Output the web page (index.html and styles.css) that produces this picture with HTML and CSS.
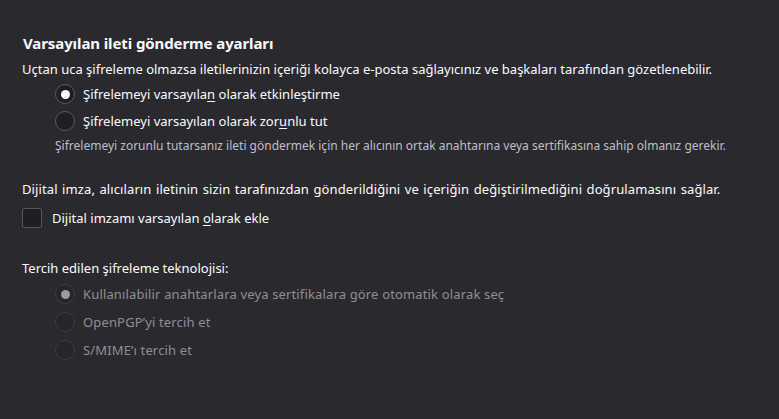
FILE: index.html
```html
<!DOCTYPE html>
<html lang="tr">
<head>
<meta charset="utf-8">
<link rel="stylesheet" href="styles.css">
</head>
<body>
<main class="page">
  <h2 class="title">Varsayılan ileti gönderme ayarları</h2>
  <p class="desc">Uçtan uca şifreleme olmazsa iletilerinizin içeriği kolayca e-posta sağlayıcınız ve başkaları tarafından gözetlenebilir.</p>
  <div class="group">
    <label class="option"><span class="radio checked"></span><span>Şifrelemeyi varsayıla<u>n</u> olarak etkinleştirme</span></label>
    <label class="option"><span class="radio"></span><span>Şifrelemeyi varsayılan olarak zor<u>u</u>nlu tut</span></label>
  </div>
  <p class="note">Şifrelemeyi zorunlu tutarsanız ileti göndermek için her alıcının ortak anahtarına veya sertifikasına sahip olmanız gerekir.</p>
  <p class="desc sig">Dijital imza, alıcıların iletinin sizin tarafınızdan gönderildiğini ve içeriğin değiştirilmediğini doğrulamasını sağlar.</p>
  <label class="check-row"><span class="checkbox"></span><span>Dijital imzamı varsayılan <u>o</u>larak ekle</span></label>
  <p class="desc tech">Tercih edilen şifreleme teknolojisi:</p>
  <div class="group disabled">
    <label class="option"><span class="radio checked"></span><span>Kullanılabilir anahtarlara veya sertifikalara göre otomatik olarak seç</span></label>
    <label class="option"><span class="radio"></span><span>OpenPGP’yi tercih et</span></label>
    <label class="option"><span class="radio"></span><span>S/MIME’ı tercih et</span></label>
  </div>
</main>
</body>
</html>
```

FILE: styles.css
```css
html, body {
  margin: 0;
  padding: 0;
  background: #2a2a2e;
  height: 100%;
}
body {
  font-family: "Noto Sans", "Open Sans", sans-serif;
  font-size: 13px;
  color: #fbfbfe;
}
.page {
  padding: 33px 0 0 22px;
  display: flex;
  flex-direction: column;
  align-items: flex-start;
}
.title {
  margin: 0 0 0 1px;
  font-size: 15px;
  font-weight: 700;
  line-height: 20px;
  letter-spacing: -0.1px;
}
.desc {
  margin: 7px 0 0;
  line-height: 18px;
}
.desc.sig {
  margin-top: 26px;
  word-spacing: 1px;
  letter-spacing: 0.1px;
}
.group {
  margin: 6px 0 0 33px;
  display: flex;
  flex-direction: column;
  gap: 7px;
}
.option {
  display: flex;
  align-items: center;
  gap: 8px;
  line-height: 20px;
}
.radio {
  width: 18px;
  height: 18px;
  border-radius: 50%;
  border: 1px solid #5b5b62;
  background: #1f1e24;
  display: flex;
  align-items: center;
  justify-content: center;
  flex: none;
}
.radio.checked::after {
  content: "";
  width: 9px;
  height: 9px;
  border-radius: 50%;
  background: #fbfbfe;
}
.note {
  margin: 7px 0 0 33px;
  font-size: 12px;
  line-height: 16px;
  color: #bfbfc9;
}
.check-row {
  margin-top: 10px;
  display: flex;
  align-items: center;
  gap: 10px;
  line-height: 20px;
}
.checkbox {
  width: 18px;
  height: 18px;
  border: 1px solid #55555c;
  border-radius: 2px;
  background: #1f1e24;
  flex: none;
}
.desc.tech {
  margin-top: 31px;
}
.group.disabled {
  margin-top: 7px;
  gap: 8px;
  color: #8e8e96;
}
.group.disabled .option span:last-child {
  letter-spacing: 0.15px;
}
.group.disabled .radio {
  border-color: #3c3c42;
  background: #26252b;
}
.group.disabled .radio.checked::after {
  background: #9a9aa0;
}
u {
  text-underline-offset: 2px;
}
```
